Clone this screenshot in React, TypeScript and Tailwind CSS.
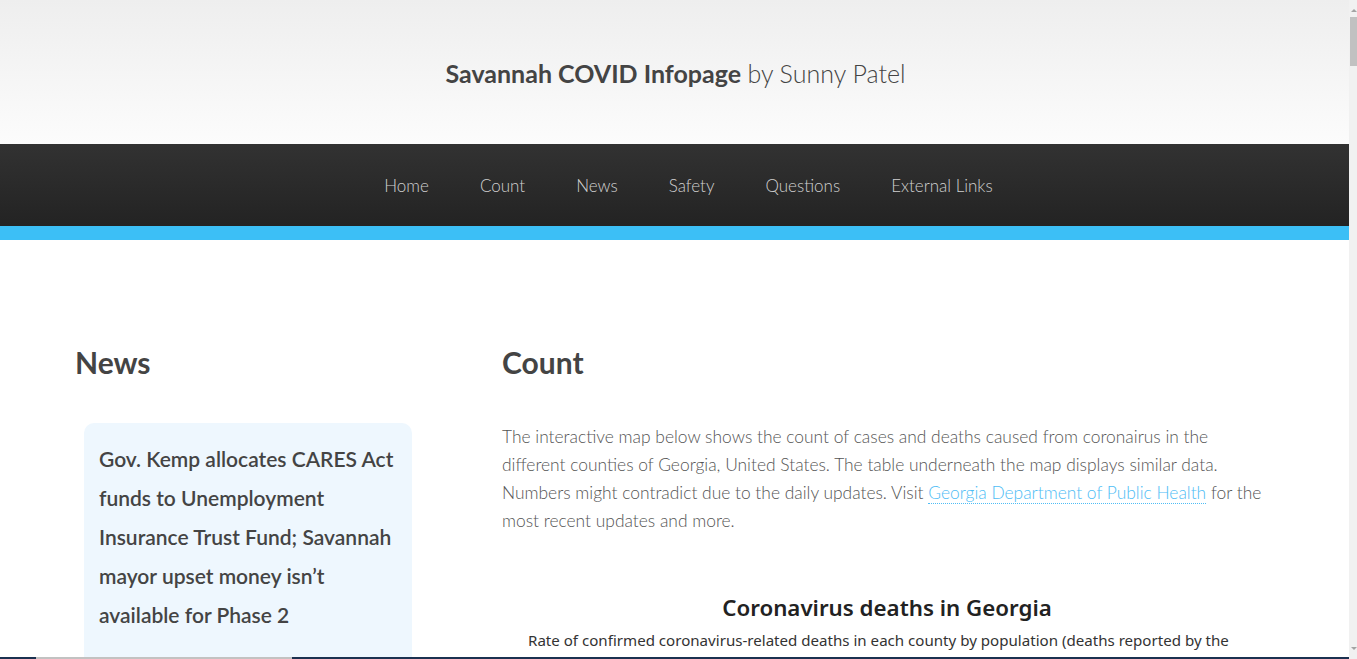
import React from "react";

const src = { fontFamily: "Lato, 'Noto Sans', sans-serif" };
const seg = { fontFamily: "'Noto Sans', 'Open Sans', sans-serif" };

export default function App() {
  const nav = ["Home", "Count", "News", "Safety", "Questions", "External Links"];
  return (
    <div className="relative h-[659px] w-[1357px] overflow-hidden bg-white flex" style={src}>
      <div className="w-[1349px] shrink-0 flex flex-col">
        <header className="h-[144px] shrink-0 bg-gradient-to-b from-[#eeeeee] to-[#fcfcfc] flex items-center justify-center pt-[4px]">
          <h1 className="text-[25px] text-[#444] pl-[2px]">
            <span className="font-bold">Savannah COVID Infopage</span>{" "}
            <span className="font-light">by Sunny Patel</span>
          </h1>
        </header>
        <nav className="h-[82px] shrink-0 bg-gradient-to-b from-[#323232] to-[#232323] flex items-center justify-center pl-[28px] pt-[2px]">
          <ul className="flex gap-[51px]">
            {nav.map((n) => (
              <li key={n} className="text-[17px] font-light text-[#d0d0d0]">{n}</li>
            ))}
          </ul>
        </nav>
        <div className="h-[14px] shrink-0 bg-[#3cbff6]" />
        <main className="flex px-[75px] pt-[104px]">
          <section className="w-[352px] shrink-0">
            <h2 className="text-[30px] font-bold text-[#444] leading-[36px]">News</h2>
            <div className="mt-[43px] ml-[9px] w-[328px] h-[300px] rounded-[10px] bg-[#eef7fe] px-[15px] pt-[16px]">
              <p className="text-[21px] font-semibold text-[#444] leading-[39px]">
                Gov. Kemp allocates CARES Act funds to Unemployment Insurance Trust Fund; Savannah mayor upset money isn’t available for Phase 2
              </p>
            </div>
          </section>
          <section className="ml-[75px] w-[770px]">
            <h2 className="text-[30px] font-bold text-[#444] leading-[36px]">Count</h2>
            <p className="mt-[43px] text-[17.4px] font-light text-[#555] leading-[28px]">
              The interactive map below shows the count of cases and deaths caused from coronairus in the different counties of Georgia, United States. The table underneath the map displays similar data. Numbers might contradict due to the daily updates. Visit{" "}
              <a className="text-[#4fbdf5] border-b border-dotted border-[#4fbdf5]">Georgia Department of Public Health</a>{" "}
              for the most recent updates and more.
            </p>
            <div className="mt-[58px]" style={seg}>
              <h3 className="text-center text-[22.3px] font-semibold text-[#222] leading-[30px]">Coronavirus deaths in Georgia</h3>
              <p className="mt-[5px] pl-[26px] text-[15.1px] text-[#333] leading-[24px] whitespace-nowrap">
                Rate of confirmed coronavirus-related deaths in each county by population (deaths reported by the
              </p>
            </div>
          </section>
        </main>
      </div>
      <div className="relative w-[8px] shrink-0 bg-[#f1f1f1]">
        <div className="absolute left-[1px] right-0 top-[17px] h-[49px] bg-[#c1c1c1]" />
        <div className="absolute left-[2px] top-[9px] w-0 h-0 border-l-[3px] border-r-[3px] border-b-[3px] border-l-transparent border-r-transparent border-b-[#a3a3a3]" />
        <div className="absolute left-[2px] bottom-[9px] w-0 h-0 border-l-[3px] border-r-[3px] border-t-[3px] border-l-transparent border-r-transparent border-t-[#a3a3a3]" />
      </div>
      <div className="absolute left-0 bottom-0 h-[2px] w-[1349px] flex">
        <div className="w-[36px] bg-[#1b3150]" />
        <div className="w-[256px] bg-[#c2c2c2]" />
        <div className="flex-1 bg-[#1b3150]" />
      </div>
    </div>
  );
}
